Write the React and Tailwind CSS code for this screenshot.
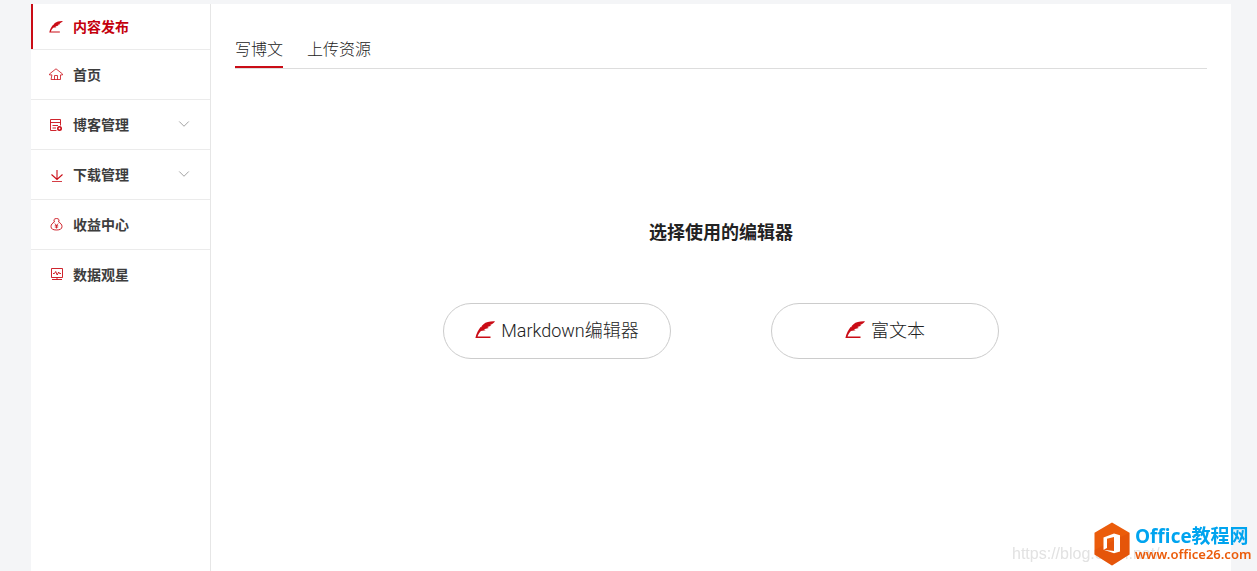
import clsx from 'clsx';
import { ChevronDown } from 'lucide-react';

const FeatherIcon = ({ className }) => (
  <svg viewBox="0 0 20 18" className={className} fill="currentColor" aria-hidden="true">
    <path d="M20 .4C15 .2 11 1.200 8.500 3.200 7.400 4.100 6.700 4.800 6.300 6.300L5.600 6.100C3.500 8.800 1.300 12.500.4 17H15.500V15.400H2.500C3.300 13.200 4.500 11.300 5.900 9.900L10.600 9.200 9 8.300 13.800 7 12.300 6.100 16.300 4.800 14.900 4C16.700 3.400 18.500 2.200 20 .4Z" />
  </svg>
);

const HomeIcon = ({ className }) => (
  <svg viewBox="0 0 14 14" className={className} fill="none" stroke="currentColor" strokeWidth=".8" strokeLinecap="round" strokeLinejoin="round" aria-hidden="true">
    <path d="M2.500 6.900H.5L.6 5.900 7 .8 13.400 5.900 13.500 6.900H11.500V11.500H8.500V7.500H5.500V11.500H2.500ZM5.500 11.500H8.500" />
  </svg>
);

const BlogIcon = ({ className }) => (
  <svg viewBox="0 0 14 14" className={className} fill="none" stroke="currentColor" strokeWidth=".9" aria-hidden="true">
    <path d="M11.500 7.500V1.500H1.500V12.500H7.500M1.500 4.500H11.500M3.500 7.500H9M3.500 10H7" />
    <circle cx="10.500" cy="10.500" r="1.700" strokeWidth="1.600" />
  </svg>
);

const DownloadIcon = ({ className }) => (
  <svg viewBox="0 0 14 14" className={className} fill="none" stroke="currentColor" strokeWidth="1.100" aria-hidden="true">
    <path d="M8 2V11.500M2.500 6.500 8 11.500 13.500 6.500" />
    <path d="M3 13.500H13" strokeWidth=".8" />
  </svg>
);

const MoneyIcon = ({ className }) => (
  <svg viewBox="0 0 14 14" className={className} fill="none" stroke="currentColor" strokeWidth=".9" aria-hidden="true">
    <path d="M5.400 4 4.900 1.800C5.500.1 9.500.1 10.100 1.800L9.600 4C11.500 5 13 6.500 13 8.500 13 11 11 12 7.500 12S2 11 2 8.500C2 6.500 3.500 5 5.400 4Z" />
    <path d="M5.800 5.500 7.500 7.500 9.200 5.500M7.500 7.500V10.500M5.800 7.700H9.200M5.800 9.100H9.200" strokeWidth=".8" />
  </svg>
);

const DataIcon = ({ className }) => (
  <svg viewBox="0 0 14 14" className={className} fill="none" stroke="currentColor" strokeWidth=".9" aria-hidden="true">
    <path d="M2.500.5H13.500V9.500H2.500ZM8 9.500V11.500M3 11.500H13M4 5.500H5.500L6.700 3.500 8.200 7 9.700 4 10.500 5.500H12" />
  </svg>
);

const menu = [
  { label: '内容发布', icon: FeatherIcon, active: true },
  { label: '首页', icon: HomeIcon },
  { label: '博客管理', icon: BlogIcon, expandable: true },
  { label: '下载管理', icon: DownloadIcon, expandable: true },
  { label: '收益中心', icon: MoneyIcon },
  { label: '数据观星', icon: DataIcon },
];

const Sidebar = () => (
  <nav className="w-[180px] shrink-0 border-r border-[#e6e6e6]">
    <ul>
      {menu.map(({ label, icon: Icon, active, expandable }) => (
        <li key={label} className="border-b border-[#ebebeb] last:border-b-0">
          <a
            href="#"
            className={clsx(
              'flex items-center gap-[10px] border-l-2 pl-4 pr-[17px] text-sm font-bold',
              active ? 'h-[45px] border-[#ca0c16] text-[#c4000c]' : 'h-[49px] border-transparent text-[#3d3d3d]'
            )}
          >
            <Icon className="h-[14px] w-[14px] text-[#ca0c16]" />
            <span className="flex-1">{label}</span>
            {expandable && <ChevronDown className="mb-0.5 h-[18px] w-[18px] text-[#999]" strokeWidth={1.2} />}
          </a>
        </li>
      ))}
    </ul>
  </nav>
);

const EditorButton = ({ children }) => (
  <button
    type="button"
    className="flex h-14 w-[228px] items-center justify-center gap-[6px] rounded-full border border-[#ccc] text-lg font-light text-[#222]"
  >
    <FeatherIcon className="mb-0.5 h-[18px] w-5 text-[#ca0c16]" />
    <span>{children}</span>
  </button>
);

const Watermark = () => (
  <div className="pointer-events-none fixed bottom-[5px] right-[5px] flex items-center">
    <span className="absolute -left-[82px] top-5 whitespace-nowrap font-['Liberation_Sans',sans-serif] text-base text-[#e2e2e2]">
      https://blog.csdn.net/
    </span>
    <svg viewBox="0 0 36 44" className="relative h-11 w-9" aria-hidden="true">
      <path d="M18 .5 35.500 10.800V32.600L18 43.500.5 32.600V10.800Z" fill="#eb5c0b" />
      <path d="M18 .5 35.500 10.800V32.600L18 43.500.5 32.600V28L35.500 10.800Z" fill="#d9480a" opacity=".35" />
      <path d="M9.500 15.500 20 11.500 26 13.300V29.500L20 31.300 9.500 27.800 20 29V15L13 16.700V26L9.500 27.800Z" fill="#fff" />
    </svg>
    <div className="relative ml-[5px] w-[117px] font-['Open_Sans','Noto_Sans_CJK_SC',sans-serif]">
      <p className="whitespace-nowrap text-[19px] font-bold leading-5 text-[#00a4ef]">Office教程网</p>
      <p className="whitespace-nowrap font-['Noto_Sans',sans-serif] text-[13px] font-semibold leading-4 text-[#eb5c0b]">www.office26.com</p>
    </div>
  </div>
);

const App = () => (
  <div className="flex min-h-screen bg-[#f4f5f7] pl-[31px] pr-[26px] pt-1 font-[Roboto,'Noto_Sans_CJK_SC',sans-serif]">
    <div className="flex flex-1 bg-white">
      <Sidebar />
      <main className="flex-1 px-6 pt-8">
        <div className="flex gap-6 border-b border-[#ddd] text-base font-light text-[#222]">
          <button type="button" className="h-8 border-b-2 border-[#ca0c16] pb-0.5">写博文</button>
          <button type="button" className="h-8 border-b-2 border-transparent pb-0.5">上传资源</button>
        </div>
        <h1 className="mt-[150px] text-center text-lg font-bold text-[#222]">选择使用的编辑器</h1>
        <div className="mt-14 flex justify-center gap-[100px]">
          <EditorButton>Markdown编辑器</EditorButton>
          <EditorButton>富文本</EditorButton>
        </div>
      </main>
    </div>
    <Watermark />
  </div>
);

export default App;
